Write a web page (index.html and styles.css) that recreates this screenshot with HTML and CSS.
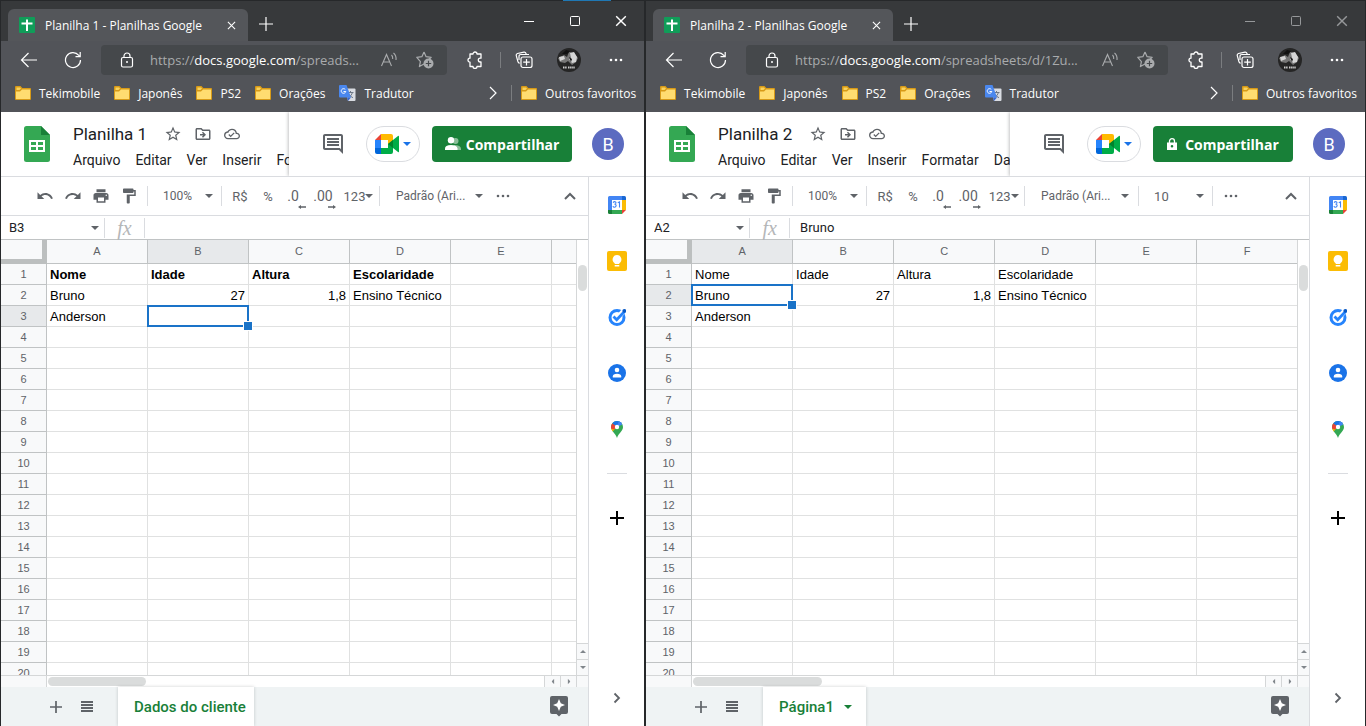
FILE: index.html
```html
<!DOCTYPE html>
<html lang="pt-BR">
<head>
<meta charset="utf-8">
<title>Planilhas Google</title>
<link rel="stylesheet" href="styles.css">
</head>
<body>
<svg class="sprite" aria-hidden="true">
  <symbol id="favicon" viewBox="0 0 16 16"><rect width="16" height="16" rx="1" fill="#109d59"/><path d="M8 2.500V14M2.500 6.500H13.500" stroke="#fff" stroke-width="2" fill="none"/></symbol>
  <symbol id="x" viewBox="0 0 10 10"><path d="M1 1l8 8M9 1l-8 8" stroke="currentColor" stroke-width="1.200" fill="none"/></symbol>
  <symbol id="plus" viewBox="0 0 14 14"><path d="M7 0v14M0 7h14" stroke="currentColor" stroke-width="1.200" fill="none"/></symbol>
  <symbol id="plus-bold" viewBox="0 0 14 14"><path d="M7 0v14M0 7h14" stroke="currentColor" stroke-width="2" fill="none"/></symbol>
  <symbol id="min" viewBox="0 0 10 10"><path d="M0 5.500h10" stroke="currentColor" fill="none"/></symbol>
  <symbol id="max" viewBox="0 0 10 10"><rect x=".5" y=".5" width="9" height="9" rx="1" stroke="currentColor" fill="none"/></symbol>
  <symbol id="back" viewBox="0 0 18 18"><path d="M17 9H1.500M8.500 2L1.500 9l7 7" stroke="currentColor" stroke-width="1.200" fill="none"/></symbol>
  <symbol id="reload" viewBox="0 0 18 18"><path d="M16.500 9A7.500 7.500 0 1 1 14.800 4.300L16 5.500M16.200 1v4.700h-4.700" stroke="currentColor" stroke-width="1.200" fill="none"/></symbol>
  <symbol id="lock" viewBox="0 0 16 16"><rect x="2.500" y="5.500" width="11" height="9.500" rx="1.500" stroke="currentColor" stroke-width="1.200" fill="none"/><path d="M5 5.500V4a3 3 0 0 1 6 0v1.500" stroke="currentColor" stroke-width="1.200" fill="none"/><circle cx="8" cy="10" r="1" fill="currentColor"/></symbol>
  <symbol id="read" viewBox="0 0 18 16"><path d="M1.500 14L6.500 2.500 11.500 14M3.200 10h6.600M11.500 3q1.500 1.500 1.200 4M13.500 1q3 2.500 2.500 7" stroke="currentColor" stroke-width="1.100" fill="none"/></symbol>
  <symbol id="fav-add" viewBox="0 0 18 18"><path d="M8 1l2.100 4.700 5.100.6-3.800 3.500M8 13l-4.600 2.600 1-5L.8 6.300l5.100-.6L8 1" stroke="currentColor" stroke-width="1.200" fill="none" stroke-linejoin="round"/><circle cx="12.500" cy="12.500" r="5" fill="currentColor"/><path d="M12.500 9.800v5.400M9.800 12.500h5.400" stroke="#45484b" stroke-width="1.200"/></symbol>
  <symbol id="puzzle" viewBox="0 0 18 18"><path d="M4 3h3a2 2 0 0 1 4 0h4v4.200h-.8a1.900 1.900 0 0 0 0 3.800h.8v4.500h-4a2 2 0 0 1-4 0H4V11.200a2 2 0 0 1 0-4z" stroke="currentColor" stroke-width="1.300" fill="none" stroke-linejoin="round"/></symbol>
  <symbol id="collections" viewBox="0 0 18 18"><rect x="6" y="6" width="11" height="10.500" rx="2" stroke="currentColor" stroke-width="1.200" fill="none"/><path d="M11.500 8v6.500M8.200 11.200h6.600M4.500 12.500L3 11 1.200 4.500Q1 3 2.500 2.500L9 1.200q1.500-.2 2 1.300l.2 1M4 9V5.500Q4 3.500 6 3.500h8" stroke="currentColor" stroke-width="1.200" fill="none"/></symbol>
  <symbol id="portrait" viewBox="0 0 24 24"><circle cx="12" cy="12" r="12" fill="#252525"/><path d="M1 10l6-3 3 2 2-5 5 1 4 5-2 4-4 3-4-4-3 2-5-1z" fill="#777"/><path d="M2 9l5-1 1 3-5 2zM13 5l4-1 3 5-1 5-4 1-3-4 2-1z" fill="#d5d5d5"/><path d="M9 2l4 1-3 3-5 0zM12 9l3 2-1 3z" fill="#111"/><path d="M6 19.500h4M11 19.500h7" stroke="#ccc" stroke-width="2" stroke-dasharray="1.500 .6"/></symbol>
  <symbol id="dots" viewBox="0 0 14 4"><circle cx="2" cy="2" r="1.300" fill="currentColor"/><circle cx="7" cy="2" r="1.300" fill="currentColor"/><circle cx="12" cy="2" r="1.300" fill="currentColor"/></symbol>
  <symbol id="folder" viewBox="0 0 16 14"><path d="M0 1.200Q0 0 1 0h4.500l1.800 2H15q1 0 1 1v10q0 1-1 1H1q-1 0-1-1z" fill="#d79a17"/><path d="M1.500 1.500H5l1 1-1.500 1.500h-3z" fill="#f9d25c"/><path d="M1 5.500h4L7 3.500h8V13H1z" fill="#ffdc70"/></symbol>
  <symbol id="translate" viewBox="0 0 17 16"><path d="M6 3.500h9.500q1 0 1 1V15q0 1-1 1H9z" fill="#d9dce2"/><path d="M8.500 7.500h6M11.500 6v1.500M13.500 7.500q-1 3.500-4 5.200M10 9q1.500 3 4 3.700" stroke="#6d7786" fill="none"/><path d="M1 0h6.500L12 12.500H1q-1 0-1-1V1q0-1 1-1z" fill="#4a87ee"/><path d="M9 16l3-3.500H8z" fill="#3367d6"/><path d="M6.300 4.500a2.300 2.300 0 1 0 .5 2H4.500" stroke="#fff" fill="none"/></symbol>
  <symbol id="chevron" viewBox="0 0 8 14"><path d="M1 1l6 6-6 6" stroke="currentColor" stroke-width="1.200" fill="none"/></symbol>
  <symbol id="sheets" viewBox="0 0 26 36"><path d="M2.500 0H17l9 9v24.500q0 2.500-2.500 2.500h-21Q0 36 0 33.500v-31Q0 0 2.500 0z" fill="#34a853"/><path d="M17 0l9 9h-9z" fill="#188038"/><path d="M5 14h16v12H5zM7 16v3h5v-3zM14 16v3h5v-3zM7 21v3h5v-3zM14 21v3h5v-3z" fill="#fff" fill-rule="evenodd"/></symbol>
  <symbol id="star" viewBox="0 0 24 24"><path fill="currentColor" d="M22 9.240l-7.190-.62L12 2 9.190 8.630 2 9.240l5.460 4.730L5.820 21 12 17.270 18.180 21l-1.630-7.030L22 9.240zM12 15.400l-3.760 2.270 1-4.280-3.320-2.880 4.380-.38L12 6.100l1.710 4.040 4.380.38-3.320 2.880 1 4.280L12 15.400z"/></symbol>
  <symbol id="move" viewBox="0 0 24 24"><path fill="currentColor" d="M20 6h-8l-2-2H4c-1.100 0-2 .9-2 2v12c0 1.100.9 2 2 2h16c1.100 0 2-.9 2-2V8c0-1.100-.9-2-2-2zm0 12H4V6h5.200l2 2H20v10zm-8-1l4-4-4-4-1.400 1.400L12.200 12H8v2h4.200l-1.600 1.600z"/></symbol>
  <symbol id="cloud" viewBox="0 0 24 24"><path fill="currentColor" d="M19.350 10.040A7.490 7.490 0 0 0 12 4C9.110 4 6.600 5.640 5.350 8.040A5.990 5.990 0 0 0 0 14c0 3.310 2.690 6 6 6h13c2.760 0 5-2.240 5-5 0-2.640-2.050-4.780-4.650-4.960zM19 18H6c-2.210 0-4-1.790-4-4s1.790-4 4-4h.7C7.400 7.700 9.500 6 12 6c3 0 5.500 2.500 5.500 5.500v.5H19c1.700 0 3 1.300 3 3s-1.300 3-3 3zm-9-3.800l-2.100-2.100-1.400 1.400L10 17l6-6-1.400-1.400z"/></symbol>
  <symbol id="comment" viewBox="0 0 24 24"><path fill="currentColor" d="M21.990 4c0-1.100-.89-2-1.990-2H4c-1.100 0-2 .9-2 2v12c0 1.100.9 2 2 2h14l4 4-.01-18zM20 4v13.170L18.830 16H4V4h16zM6 12h12v2H6zm0-3h12v2H6zm0-3h12v2H6z"/></symbol>
  <symbol id="meet" viewBox="0 0 24 20"><path d="M6 0v6H0z" fill="#ea4335"/><path d="M0 6h6v8H0z" fill="#2684fc"/><path d="M0 14h6v6H2q-2 0-2-2z" fill="#0066da"/><path d="M6 0h10q2 0 2 2v8h-5V6H6z" fill="#ffba00"/><path d="M6 14h7v-4h5v8q0 2-2 2H6z" fill="#00ac47"/><path d="M13 10l10-8q1-.7 1 .5v15q0 1.200-1 .5z" fill="#00ac47"/><path d="M13 10l5-4v8z" fill="#00832d"/></symbol>
  <symbol id="caret" viewBox="0 0 8 4"><path d="M0 0h8L4 4z" fill="currentColor"/></symbol>
  <symbol id="people" viewBox="0 0 16 14"><circle cx="10.500" cy="4" r="3" fill="#8abf99"/><path d="M9 8q7 0 7 4v1H9z" fill="#8abf99"/><circle cx="6" cy="3.200" r="3.200" fill="#fff"/><path d="M0 13v-1.500Q0 8 6 8t6.500 3.500V13z" fill="#fff"/></symbol>
  <symbol id="lock-solid" viewBox="0 0 10 12"><path d="M2.500 5V3.200a2.500 2.500 0 0 1 5 0V5" stroke="#fff" stroke-width="1.300" fill="none"/><path d="M0 4.500h10V12H0zM5 7a1.300 1.300 0 1 0 0 2.600A1.300 1.300 0 0 0 5 7z" fill="#fff" fill-rule="evenodd"/></symbol>
  <symbol id="undo" viewBox="0 0 24 24"><path fill="currentColor" d="M12.500 8c-2.650 0-5.050.99-6.900 2.600L2 7v9h9l-3.620-3.620c1.390-1.160 3.160-1.880 5.120-1.880 3.540 0 6.550 2.310 7.600 5.500l2.370-.78C21.080 11.030 17.150 8 12.500 8z"/></symbol>
  <symbol id="redo" viewBox="0 0 24 24"><path fill="currentColor" d="M18.400 10.600C16.550 8.990 14.150 8 11.500 8c-4.650 0-8.580 3.030-9.960 7.220L3.900 16a8 8 0 0 1 7.600-5.500c1.950 0 3.730.72 5.120 1.880L13 16h9V7l-3.600 3.600z"/></symbol>
  <symbol id="print" viewBox="0 0 24 24"><path fill="currentColor" d="M19 8H5c-1.660 0-3 1.340-3 3v6h4v4h12v-4h4v-6c0-1.660-1.340-3-3-3zm-3 11H8v-5h8v5zm3-7c-.55 0-1-.45-1-1s.45-1 1-1 1 .45 1 1-.45 1-1 1zm-1-9H6v4h12V3z"/></symbol>
  <symbol id="paint" viewBox="0 0 24 24"><path fill="currentColor" d="M18 4V3c0-.55-.45-1-1-1H5c-.55 0-1 .45-1 1v4c0 .55.45 1 1 1h12c.55 0 1-.45 1-1V6h1v4H9v11c0 .55.45 1 1 1h2c.55 0 1-.45 1-1v-9h8V4h-3z"/></symbol>
  <symbol id="arrow-left" viewBox="0 0 8 4"><path d="M0 2l3-2v1.200h5v1.600H3V4z" fill="currentColor"/></symbol>
  <symbol id="arrow-right" viewBox="0 0 8 4"><path d="M8 2L5 0v1.200H0v1.600h5V4z" fill="currentColor"/></symbol>
  <symbol id="chevron-up" viewBox="0 0 12 8"><path d="M1 7l5-5 5 5" stroke="currentColor" stroke-width="2" fill="none"/></symbol>
  <symbol id="chevron-bold" viewBox="0 0 8 12"><path d="M1.500 1.500L6 6l-4.500 4.500" stroke="currentColor" stroke-width="1.800" fill="none"/></symbol>
  <symbol id="calendar" viewBox="0 0 18 18"><path d="M1.500 0H14v4H4v10H0V1.500Q0 0 1.500 0z" fill="#4285f4"/><path d="M14 0h2.500Q18 0 18 1.500V4h-4z" fill="#1967d2"/><path d="M14 4h4v10h-4z" fill="#fbbc04"/><path d="M4 14h10v4H4z" fill="#34a853"/><path d="M0 14h4v4H1.500Q0 18 0 16.500z" fill="#188038"/><path d="M14 14h4l-4 4z" fill="#ea4335"/><path d="M4 4h10v10H4z" fill="#fff"/><path d="M5.200 6.700q.5-1.200 1.800-1 1.300.4.800 1.700-.3.700-1.300.8 1.700 0 1.700 1.500-.3 1.600-1.700 1.600-1.200 0-1.600-1.200M9.800 6.700l1.700-.9v5.600" stroke="#4285f4" stroke-width="1.100" fill="none"/></symbol>
  <symbol id="keep" viewBox="0 0 20 20"><rect width="20" height="20" rx="2" fill="#fbbc04"/><path d="M10 4a4.500 4.500 0 0 0-2.300 8.300V13h4.600v-.7A4.500 4.500 0 0 0 10 4zM7.700 14h4.600v1.500H7.700z" fill="#fff"/></symbol>
  <symbol id="tasks" viewBox="0 0 18 18"><circle cx="9" cy="9.500" r="7" stroke="#2684fc" stroke-width="3" fill="none"/><path d="M15.200 3.500L8.700 11" stroke="#fff" stroke-width="5"/><path d="M5.500 8.500L8.700 11.700 17 3" stroke="#2684fc" stroke-width="2.800" fill="none"/><circle cx="16.300" cy="2.800" r="1.900" fill="#0757c4"/></symbol>
  <symbol id="contacts" viewBox="0 0 18 18"><circle cx="9" cy="9" r="9" fill="#1a73e8"/><circle cx="9" cy="6" r="2.300" fill="#fff"/><path d="M4.800 13.500v-1.200q0-2.500 4.200-2.500t4.200 2.500v1.200z" fill="#fff"/></symbol>
  <symbol id="maps" viewBox="0 0 12 17"><path d="M6 0a6 6 0 0 1 6 6c0 4-4.500 6-6 11C4.500 12 0 10 0 6a6 6 0 0 1 6-6z" fill="#34a853"/><path d="M1.700 10.400L7 4 4 3 .3 7.500Q.8 9 1.700 10.400z" fill="#fbbc04"/><path d="M6 6L1.400 2.200A6 6 0 0 0 .2 7.500l2.500 1z" fill="#ea4335"/><path d="M6 6l4.200-4.200A6 6 0 0 0 1.400 2.200z" fill="#1a73e8"/><path d="M6 6l5.300-2.500Q10 .8 7.800.2z" fill="#4285f4"/><circle cx="6" cy="6" r="2.200" fill="#fff"/></symbol>
  <symbol id="list" viewBox="0 0 12 11"><path d="M0 1h12M0 4h12M0 7h12M0 10h12" stroke="currentColor" stroke-width="1.800"/></symbol>
  <symbol id="explore" viewBox="0 0 18 21"><path d="M2 0h14q2 0 2 2v14q0 2-2 2h-4.500L9 20.500 6.500 18H2q-2 0-2-2V2Q0 0 2 0z" fill="#5f6368"/><path d="M9 3l1.800 4.200L15 9l-4.200 1.800L9 15l-1.800-4.200L3 9l4.200-1.800z" fill="#fff"/></symbol>
</svg>
<script src="app.js"></script>
</body>
</html>
```
FILE: styles.css
```css
* { box-sizing: border-box; }
body {
  margin: 0;
  height: 100vh;
  display: flex;
  overflow: hidden;
  background: #26282a;
  font-family: Roboto, "Liberation Sans", sans-serif;
  color: #202124;
}
button, input { font: inherit; color: inherit; border: 0; background: none; padding: 0; margin: 0; }
a { color: inherit; text-decoration: none; }
svg { display: block; flex: none; }
.sprite { position: absolute; width: 0; height: 0; }
.icon-btn { display: flex; align-items: center; justify-content: center; flex: none; }

.window {
  position: relative;
  min-width: 0;
  display: flex;
  flex-direction: column;
  border: 1px solid #26282a;
  border-bottom: 0;
  background: #fff;
}
.window-narrow { flex: 645 1 0; }
.window-wide { flex: 721 1 0; }
.window-narrow::before { content: ""; position: absolute; top: -1px; right: 33px; width: 48px; height: 1px; background: #1f78b4; }

/* browser chrome */
.browser { font-family: "Open Sans", "Noto Sans", sans-serif; font-size: 12px; color: #fff; background: #525459; }
.tabstrip { display: flex; height: 40px; background: #37393b; }
.tab {
  display: flex; align-items: center;
  width: 240px; height: 32px; margin: 8px 0 0 7px; padding: 0 12px 0 11px;
  border-radius: 6px 6px 0 0; background: #54565a;
}
.tab span { margin-left: 10px; flex: 1; white-space: nowrap; }
.new-tab { width: 35px; padding-top: 6px; }
.controls { display: flex; margin-left: auto; }
.controls button { width: 46px; }
.window-wide .controls { color: #96989a; }
.navbar { display: flex; align-items: center; height: 38px; padding: 0 3px 0 6px; }
.navbar .nav { width: 44px; height: 30px; }
.address {
  display: flex; align-items: center; flex: 1; min-width: 0; height: 30px;
  margin: 0 3px 0 6px; padding: 0 13px 0 18px; border-radius: 4px;
  background: #45484b; color: #a9abad; font-size: 13px;
}
.address p { margin: 0 0 0 15px; flex: 1; min-width: 0; white-space: nowrap; }
.address b { font-weight: 400; color: #fff; }
.address .icon-btn { margin-left: 18px; }
.address .secure { margin-left: 0; color: #fff; }
.navbar .side { width: 50px; }
.navbar .mid { width: 45px; }
.rule { width: 1px; height: 16px; background: #7b7d80; flex: none; }
.bookmarks { display: flex; align-items: center; height: 33px; padding: 0 8px 5px 14px; gap: 14px; }
.bookmarks a { display: flex; align-items: center; gap: 8px; white-space: nowrap; }
.bookmarks .more { margin-left: auto; }
.bookmarks .more + .rule { margin-right: -5px; }

/* document header */
.doc-header { display: flex; height: 65px; border-bottom: 1px solid #dadce0; flex: none; }
.doc-main { flex: 1; min-width: 0; display: flex; overflow: hidden; padding: 14px 0 0 23px; gap: 23px; }
.doc-text { min-width: 0; white-space: nowrap; }
.title-row { display: flex; align-items: center; gap: 12px; margin-top: -4px; height: 24px; color: #5f6368; }
.title-row h1 { margin: 0 5px 0 0; font-size: 17px; font-weight: 400; line-height: 24px; color: #202124; }
.menus { display: flex; gap: 15px; font-size: 14px; line-height: 20px; margin-top: 4px; }
.doc-actions {
  display: flex; align-items: center; flex: none; width: 355px; padding: 0 19px 0 32px;
  box-shadow: -1px 0 3px rgba(60, 64, 67, .3); clip-path: inset(0 0 0 -4px);
  color: #5f6368;
}
.meet { width: 54px; height: 36px; margin: 0 12px 0 21px; gap: 4px; border: 1px solid #dadce0; border-radius: 18px; color: #1a73e8; }
.share { width: 140px; height: 36px; gap: 5px; border-radius: 4px; background: #188038; color: #fff; font-size: 14px; font-weight: 700; font-family: "Open Sans", sans-serif; }
.window-wide .share { gap: 8px; }
.avatar { width: 32px; height: 32px; margin-left: 20px; border-radius: 50%; background: #5c6bc0; color: #fff; font-size: 18px; }

/* work area */
.work { display: flex; flex: 1; min-height: 0; }
.editor { flex: 1; min-width: 0; display: flex; flex-direction: column; }
.toolbar { display: flex; align-items: center; height: 39px; padding: 0 12px 0 30px; border-bottom: 1px solid #dadce0; color: #5f6368; font-size: 13px; flex: none; }
.toolbar button { display: flex; align-items: center; justify-content: center; height: 26px; white-space: nowrap; flex: none; }
.tool { width: 28px; }
.toolbar .rule, .formula .rule { height: 20px; background: #dadce0; }
.toolbar .lead { margin-left: 4px; }
.toolbar .zoom { width: 73px; gap: 13px; padding-left: 15px; justify-content: flex-start; font-size: 12px; }
.currency { width: 36px; }
.percent { width: 20px; }
.decimal { width: 30px; position: relative; font-size: 14px; }
.decimal svg { position: absolute; right: 2px; bottom: 0; }
.number { width: 41px; }
.toolbar .font { width: 105px; gap: 10px; padding-left: 16px; justify-content: flex-start; font-size: 12px; }
.window-wide .toolbar .font { width: 113px; }
.toolbar .size { width: 73px; justify-content: space-between; padding: 0 8px 0 15px; }
.toolbar .overflow { width: 36px; }
.toolbar .collapse { margin-left: auto; }
.formula { display: flex; align-items: center; height: 24px; border-bottom: 1px solid #c0c3c4; font-size: 13px; flex: none; }
.formula input { min-width: 0; }
.name-box { width: 85px; padding-left: 8px; }
.formula .pick { width: 18px; color: #5f6368; }
.fx { width: 39px; text-align: center; font: italic 20px/22px "Liberation Serif", serif; color: #b4b6b8; }
.formula .expression { flex: 1; padding-left: 10px; }
.grid-area { display: grid; grid-template: minmax(0, 1fr) 12px / minmax(0, 1fr) 12px; flex: 1; min-height: 0; }
.viewport { overflow: hidden; }

.sheet { table-layout: fixed; width: 753px; border-collapse: separate; border-spacing: 0; font: 13px/19px "Liberation Sans", Arial, sans-serif; color: #000; }
.sheet th, .sheet td { height: 21px; padding: 1px 3px 0; border: solid #e0e1e1; border-width: 0 1px 1px 0; white-space: nowrap; text-align: left; overflow: hidden; }
.sheet .num { text-align: right; }
.sheet .strong td { font-weight: 700; }
.sheet thead th, .sheet tbody th { background: #f8f9fa; border-color: #c0c3c4; color: #5f6368; font-size: 11px; font-weight: 400; text-align: center; padding-top: 0; }
.sheet thead th { height: 24px; }
.sheet .row-col { width: 46px; }
.sheet thead .corner { border: solid #bcbfbf; border-width: 0 5px 5px 0; }
.sheet thead .active, .sheet tbody .active { background: #e7e9eb; }
.sheet .selected { position: relative; overflow: visible; }
.sheet .selected::before { content: ""; position: absolute; inset: -1px; border: 2px solid #1a73c8; }
.sheet .selected::after { content: ""; position: absolute; right: -5px; bottom: -5px; width: 8px; height: 8px; border: 1px solid #fff; background: #1a73c8; }
.vscroll { display: flex; flex-direction: column; border-left: 1px solid #d5d7d8; padding: 25px 1px 0; }
.vscroll .thumb { height: 26px; margin-bottom: auto; }
.thumb { border-radius: 5px; background: #dadcdc; }
.scroll-btn { display: flex; align-items: center; justify-content: center; color: #80868b; background: #f8f9fa; }
.vscroll .scroll-btn { height: 16px; margin: 0 -1px; border-top: 1px solid #d5d7d8; }
.up svg { transform: rotate(180deg); }
.left svg { transform: rotate(90deg); }
.right svg { transform: rotate(270deg); }
.hscroll { display: flex; border-top: 1px solid #d5d7d8; }
.hscroll .pad { width: 46px; background: #f8f9fa; border-right: 1px solid #d5d7d8; }
.hscroll .thumb { width: 98px; height: 9px; margin: 1px auto 0 1px; }
.window-wide .hscroll .thumb { width: 129px; }
.hscroll .scroll-btn { width: 16px; border-left: 1px solid #d5d7d8; }
.scroll-corner { border: solid #d5d7d8; border-width: 1px 0 0 1px; background: #f8f9fa; }

.sheetbar { display: flex; align-items: center; height: 39px; padding: 0 20px 0 49px; background: #eff3f4; color: #5f6368; flex: none; }
.sheetbar .all { margin: 0 25px 0 19px; }
.sheet-tab { display: flex; align-items: center; gap: 10px; height: 100%; padding: 0 8px 0 16px; background: #fff; color: #188038; font-size: 15px; font-weight: 500; box-shadow: 0 0 3px rgba(60, 64, 67, .25); }
.window-wide .sheet-tab { padding-right: 14px; }
.sheetbar .explore { margin-left: auto; }

/* add-on panel */
.panel { width: 56px; display: flex; flex-direction: column; align-items: center; border-left: 1px solid #dadce0; flex: none; }
.panel .icon-btn { width: 40px; height: 56px; }
.panel hr { width: 20px; height: 1px; margin: 16px 0; border: 0; background: #dadce0; }
.panel .add { color: #000; }
.panel .hide { margin-top: auto; color: #5f6368; }
```
FILE: app.js
```javascript
const icon = (id, w, h = w) => `<svg width="${w}" height="${h}" aria-hidden="true"><use href="#${id}"/></svg>`;
const button = (cls, label, id, w, h) => `<button class="icon-btn ${cls}" aria-label="${label}">${icon(id, w, h)}</button>`;
const rule = '<span class="rule"></span>';
const columns = ['A', 'B', 'C', 'D', 'E', 'F', 'G'];

function bookmark(name, id = 'folder', w = 16, h = 14) {
  return `<a href="#">${icon(id, w, h)}${name}</a>`;
}

function sheet(doc) {
  const head = columns.map(c => `<th class="${c === doc.column ? 'active' : ''}">${c}</th>`).join('');
  let rows = '';
  for (let r = 1; r <= 20; r++) {
    const cells = columns.map((c, i) => {
      const value = (doc.rows[r - 1] || [])[i] || '';
      const cls = [/^\d/.test(value) ? 'num' : '', c === doc.column && r === doc.row ? 'selected' : ''].join(' ').trim();
      return `<td${cls ? ` class="${cls}"` : ''}>${value}</td>`;
    }).join('');
    rows += `<tr class="${r === 1 && doc.boldHeader ? 'strong' : ''}"><th class="${r === doc.row ? 'active' : ''}">${r}</th>${cells}</tr>`;
  }
  return `<table class="sheet"><thead><tr><th class="row-col corner"></th>${head}</tr></thead><tbody>${rows}</tbody></table>`;
}

function windowView(doc) {
  return `<section class="window window-${doc.kind}">
  <header class="browser">
    <div class="tabstrip">
      <div class="tab">${icon('favicon', 16)}<span>${doc.title} - Planilhas Google</span>${button('', 'Fechar guia', 'x', 9)}</div>
      ${button('new-tab', 'Nova guia', 'plus', 14)}
      <div class="controls">${button('', 'Minimizar', 'min', 10)}${button('', 'Maximizar', 'max', 10)}${button('', 'Fechar', 'x', 12)}</div>
    </div>
    <div class="navbar">
      ${button('nav', 'Voltar', 'back', 18)}${button('nav', 'Atualizar', 'reload', 18)}
      <div class="address">${button('secure', 'Site seguro', 'lock', 16)}<p>https://<b>docs.google.com</b>${doc.path}</p>
        ${button('', 'Ler em voz alta', 'read', 18, 16)}${button('', 'Adicionar aos favoritos', 'fav-add', 18)}</div>
      ${button('side', 'Extensões', 'puzzle', 18)}${rule}${button('mid', 'Coleções', 'collections', 18)}
      ${button('mid', 'Perfil', 'portrait', 24)}${button('side', 'Mais', 'dots', 14, 4)}
    </div>
    <nav class="bookmarks">
      ${bookmark('Tekimobile')}${bookmark('Japonês')}${bookmark('PS2')}${bookmark('Orações')}${bookmark('Tradutor', 'translate', 17, 16)}
      ${button('more', 'Mais favoritos', 'chevron', 8, 14)}${rule}${bookmark('Outros favoritos')}
    </nav>
  </header>
  <div class="doc-header">
    <div class="doc-main">${icon('sheets', 26, 36)}
      <div class="doc-text">
        <div class="title-row"><h1>${doc.title}</h1>${button('', 'Marcar com estrela', 'star', 18)}${button('', 'Mover', 'move', 18)}${button('', 'Status do documento', 'cloud', 16)}</div>
        <nav class="menus">${['Arquivo', 'Editar', 'Ver', 'Inserir', 'Formatar', 'Dados'].slice(0, doc.menuCount).map(m => `<button>${m}</button>`).join('')}</nav>
      </div>
    </div>
    <div class="doc-actions">${button('', 'Comentários', 'comment', 24)}
      <button class="icon-btn meet" aria-label="Meet">${icon('meet', 24, 20)}${icon('caret', 8, 4)}</button>
      <button class="icon-btn share">${doc.shared ? icon('people', 16, 14) : icon('lock-solid', 10, 12)}Compartilhar</button>
      <button class="icon-btn avatar">B</button></div>
  </div>
  <div class="work">
    <main class="editor">
      <div class="toolbar">
        ${button('tool', 'Desfazer', 'undo', 18)}${button('tool', 'Refazer', 'redo', 18)}${button('tool', 'Imprimir', 'print', 18)}${button('tool', 'Pintar formatação', 'paint', 18)}
        <span class="rule lead"></span><button class="zoom">100%${icon('caret', 8, 4)}</button>${rule}
        <button class="currency">R$</button><button class="percent">%</button>
        <button class="decimal">.0${icon('arrow-left', 8, 4)}</button><button class="decimal">.00${icon('arrow-right', 8, 4)}</button>
        <button class="number">123${icon('caret', 8, 4)}</button>${rule}
        <button class="font">Padrão (Ari...${icon('caret', 8, 4)}</button>
        ${doc.fontSize ? `${rule}<button class="size">${doc.fontSize}${icon('caret', 8, 4)}</button>${rule}` : ''}
        ${button('overflow', 'Mais', 'dots', 14, 4)}${button('collapse', 'Ocultar menus', 'chevron-up', 12, 8)}
      </div>
      <div class="formula">
        <input class="name-box" aria-label="Caixa de nome" value="${doc.column}${doc.row}">${button('pick', 'Intervalos', 'caret', 8, 4)}
        ${rule}<span class="fx">fx</span>${rule}<input class="expression" aria-label="Barra de fórmulas" value="${doc.formula}">
      </div>
      <div class="grid-area">
        <div class="viewport">${sheet(doc)}</div>
        <div class="vscroll"><div class="thumb"></div><div class="scroll-btn up">${icon('caret', 6, 3)}</div><div class="scroll-btn">${icon('caret', 6, 3)}</div></div>
        <div class="hscroll"><div class="pad"></div><div class="thumb"></div><div class="scroll-btn left">${icon('caret', 6, 3)}</div><div class="scroll-btn right">${icon('caret', 6, 3)}</div></div>
        <div class="scroll-corner"></div>
      </div>
      <footer class="sheetbar">${button('', 'Adicionar página', 'plus-bold', 12)}${button('all', 'Todas as páginas', 'list', 12, 11)}
        <button class="sheet-tab">${doc.tab}${doc.tabMenu ? icon('caret', 8, 4) : ''}</button>${button('explore', 'Explorar', 'explore', 18, 21)}</footer>
    </main>
    <aside class="panel">
      ${button('', 'Agenda', 'calendar', 18)}${button('', 'Keep', 'keep', 20)}${button('', 'Tarefas', 'tasks', 18)}${button('', 'Contatos', 'contacts', 18)}${button('', 'Maps', 'maps', 12, 17)}
      <hr>${button('add', 'Instalar complementos', 'plus-bold', 14)}${button('hide', 'Ocultar painel', 'chevron-bold', 8, 12)}
    </aside>
  </div>
</section>`;
}

const header = ['Nome', 'Idade', 'Altura', 'Escolaridade'];
const people = [['Bruno', '27', '1,8', 'Ensino Técnico'], ['Anderson']];
const docs = [
  { kind: 'narrow', title: 'Planilha 1', path: '/spreads...', shared: true, menuCount: 5, column: 'B', row: 3, formula: '', boldHeader: true, rows: [header, ...people], tab: 'Dados do cliente' },
  { kind: 'wide', title: 'Planilha 2', path: '/spreadsheets/d/1Zu...', fontSize: 10, menuCount: 6, column: 'A', row: 2, formula: 'Bruno', rows: [header, ...people], tab: 'Página1', tabMenu: true },
];
document.body.insertAdjacentHTML('beforeend', docs.map(windowView).join(''));
```
